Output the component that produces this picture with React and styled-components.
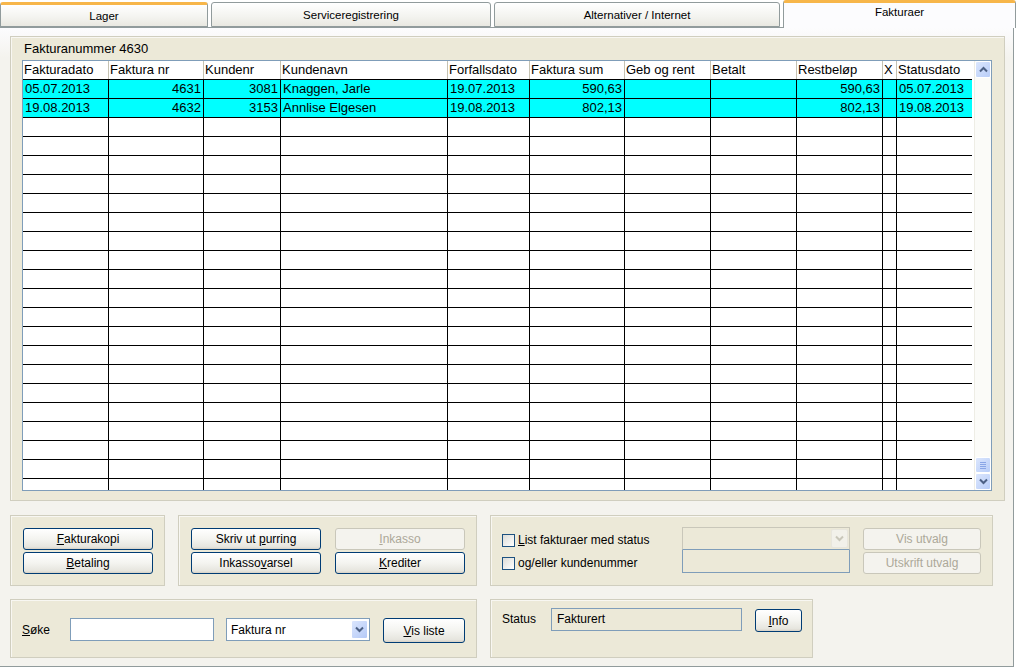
import React from "react";
import styled, { createGlobalStyle } from "styled-components";

const Global = createGlobalStyle`
  html, body {
    margin: 0;
    padding: 0;
    background: #ffffff;
  }
  body {
    font-family: "Liberation Sans", Arial, sans-serif;
    color: #000;
  }
`;

const Window = styled.div`
  width: 1016px;
  height: 668px;
  overflow: hidden;
  background: #ffffff;
`;

const TabBar = styled.div`
  display: flex;
  align-items: flex-end;
  gap: 3px;
  height: 27px;
  position: relative;
  z-index: 1;
`;

const Tab = styled.div`
  box-sizing: border-box;
  width: ${(p) => p.$w}px;
  height: ${(p) => (p.$active ? 28 : 25)}px;
  margin-bottom: ${(p) => (p.$active ? -1 : 0)}px;
  border: 1px solid #919b9c;
  border-bottom: ${(p) => (p.$active ? "none" : "1px solid #919b9c")};
  border-top: ${(p) =>
    p.$active || p.$hover ? "3px solid #f7b64a" : "1px solid #919b9c"};
  border-radius: 3px 3px 0 0;
  background: ${(p) =>
    p.$active ? "#fcfcfe" : "linear-gradient(#ffffff, #f3f3ef 60%, #e9e8e1)"};
  font-size: 11.5px;
  display: flex;
  justify-content: center;
  align-items: ${(p) => (p.$active ? "flex-start" : "center")};
  padding-top: ${(p) => (p.$active ? 3 : 0)}px;
`;

const Pane = styled.div`
  box-sizing: border-box;
  width: 1014px;
  height: 640px;
  border: 1px solid #919b9c;
  border-left: none;
  background: linear-gradient(#fcfcfe, #f4f3ee 30px);
  padding: 8px 0 0 10px;
`;

const Panel = styled.div`
  box-sizing: border-box;
  width: ${(p) => p.$w}px;
  height: ${(p) => p.$h}px;
  background: #ece9d8;
  border: 1px solid #d0cebf;
  box-shadow: inset 1px 1px 0 #f8f7f2;
`;

const MainPanel = styled(Panel)`
  padding: 5px 0 0 11px;
`;

const Caption = styled.div`
  font-size: 13px;
  height: 18px;
  line-height: 14px;
  padding-left: 2px;
`;

const GridBox = styled.div`
  box-sizing: border-box;
  width: 970px;
  height: 431px;
  border: 1px solid #7f9db9;
  background: #ffffff;
  display: flex;
  overflow: hidden;
`;

const GridArea = styled.div`
  width: 951px;
  overflow: hidden;
  font-size: 13px;
`;

const COLS = "86px 95px 77px 167px 82px 95px 86px 86px 86px 14px 76px";

const HeadRow = styled.div`
  display: grid;
  grid-template-columns: ${COLS};
  height: 18px;
  border-bottom: 1px solid #000;
  box-sizing: content-box;
  background: #ffffff;
`;

const HeadCell = styled.div`
  border-right: 1px solid #c5c2b2;
  padding-left: 1px;
  line-height: 18px;
  white-space: nowrap;
  overflow: hidden;
`;

const Row = styled.div`
  display: grid;
  grid-template-columns: ${COLS};
  height: 18px;
  border-bottom: 1px solid #000;
  background: ${(p) => (p.$hit ? "#00ffff" : "#ffffff")};
`;

const Cell = styled.div`
  border-right: 1px solid #000;
  padding: 0 2px;
  line-height: 18px;
  text-align: ${(p) => (p.$num ? "right" : "left")};
  white-space: nowrap;
  overflow: hidden;
`;

const ScrollBar = styled.div`
  margin-left: 2px;
  width: 16px;
  display: flex;
  flex-direction: column;
  background: #fbfbf8;
  border-left: 1px solid #eeede5;
`;

const ScrollBtn = styled.div`
  box-sizing: border-box;
  width: 16px;
  height: 17px;
  border: 1px solid #ffffff;
  border-radius: 2px;
  background: linear-gradient(135deg, #dbe6fd, #b8cdf8);
  display: flex;
  align-items: center;
  justify-content: center;
`;

const Track = styled.div`
  flex: 1;
  display: flex;
  flex-direction: column;
  justify-content: flex-end;
`;

const Thumb = styled(ScrollBtn)`
  height: 16px;
  flex-direction: column;
  gap: 1px;
  & > span {
    width: 6px;
    height: 1px;
    background: #8aa6e6;
  }
`;

const Bottom = styled.div`
  display: flex;
  gap: 13px;
  margin-top: ${(p) => p.$top}px;
`;

const ButtonPanel = styled(Panel)`
  padding: 12px 0 0 12px;
  display: grid;
  grid-template-columns: repeat(${(p) => p.$cols}, 130px);
  grid-auto-rows: 22px;
  column-gap: 14px;
  row-gap: 2px;
  align-content: start;
`;

const Button = styled.button`
  box-sizing: border-box;
  width: ${(p) => p.$w || 130}px;
  height: ${(p) => p.$h || 22}px;
  padding: 0;
  margin: 0;
  font-family: "Liberation Sans", Arial, sans-serif;
  font-size: 12px;
  color: ${(p) => (p.disabled ? "#aca899" : "#000")};
  border: 1px solid ${(p) => (p.disabled ? "#c9c7ba" : "#003c74")};
  border-radius: 3px;
  background: ${(p) =>
    p.disabled
      ? "#f4f3ee"
      : "linear-gradient(#ffffff, #f4f4f0 50%, #e6e5de 90%, #d6d0c5)"};
  & u {
    text-decoration: underline;
  }
`;

const FilterPanel = styled(Panel)`
  padding: 11px 0 0 11px;
  display: grid;
  grid-template-columns: 167px 168px 118px;
  column-gap: 13px;
  align-content: start;
`;

const CheckCol = styled.div`
  display: flex;
  flex-direction: column;
  gap: 9px;
  padding-top: 6px;
`;

const CheckRow = styled.label`
  display: flex;
  align-items: center;
  gap: 3px;
  font-size: 12px;
  height: 14px;
  white-space: nowrap;
`;

const Box = styled.span`
  box-sizing: border-box;
  flex: none;
  width: 13px;
  height: 13px;
  border: 1px solid #1c5180;
  background: linear-gradient(135deg, #dcdcd7, #ffffff);
`;

const FieldCol = styled.div`
  display: flex;
  flex-direction: column;
`;

const Combo = styled.div`
  box-sizing: border-box;
  height: 23px;
  border: 1px solid ${(p) => (p.$off ? "#c9c7ba" : "#7f9db9")};
  border-bottom: 1px solid #7f9db9;
  background: ${(p) => (p.$off ? "#ece9d8" : "#ffffff")};
  display: flex;
  align-items: center;
  justify-content: space-between;
  padding: 0 1px 0 4px;
  font-size: 12px;
  width: ${(p) => p.$w || 168}px;
`;

const DropBtn = styled.div`
  box-sizing: border-box;
  width: 17px;
  height: 19px;
  border: 1px solid ${(p) => (p.$off ? "#e8e6dd" : "#ffffff")};
  border-radius: 2px;
  background: ${(p) =>
    p.$off ? "#f2f1ea" : "linear-gradient(135deg, #dbe6fd, #b4c9f7)"};
  display: flex;
  align-items: center;
  justify-content: center;
`;

const TextBox = styled.div`
  box-sizing: border-box;
  width: ${(p) => p.$w}px;
  height: 23px;
  border: 1px solid #7f9db9;
  border-top: ${(p) => (p.$joined ? "none" : "1px solid #7f9db9")};
  background: ${(p) => (p.$off ? "#ece9d8" : "#ffffff")};
  font-size: 12px;
  line-height: 21px;
  padding-left: 5px;
`;

const ButtonCol = styled.div`
  display: flex;
  flex-direction: column;
  gap: 2px;
  padding-top: 1px;
`;

const SearchPanel = styled(Panel)`
  display: flex;
  align-items: center;
  padding-left: 11px;
  padding-top: 2px;
`;

const Label = styled.span`
  font-size: 12px;
  width: ${(p) => p.$w}px;
`;

const StatusPanel = styled(Panel)`
  display: flex;
  align-items: flex-start;
  padding: 8px 0 0 11px;
`;

const Chevron = ({ up, off }) => (
  <svg width="9" height="7" viewBox="0 0 9 7">
    <path
      d={up ? "M1 5.5 L4.5 2 L8 5.5" : "M1 1.5 L4.5 5 L8 1.5"}
      fill="none"
      stroke={off ? "#c9c7ba" : "#4d6185"}
      strokeWidth="2"
    />
  </svg>
);

const columns = [
  "Fakturadato",
  "Faktura nr",
  "Kundenr",
  "Kundenavn",
  "Forfallsdato",
  "Faktura sum",
  "Geb og rent",
  "Betalt",
  "Restbeløp",
  "X",
  "Statusdato",
];

const numeric = [false, true, true, false, false, true, true, true, true, false, false];

const invoices = [
  ["05.07.2013", "4631", "3081", "Knaggen, Jarle", "19.07.2013", "590,63", "", "", "590,63", "", "05.07.2013"],
  ["19.08.2013", "4632", "3153", "Annlise Elgesen", "19.08.2013", "802,13", "", "", "802,13", "", "19.08.2013"],
];

const rows = [...invoices, ...Array.from({ length: 20 }, () => Array(11).fill(""))];

export default function App() {
  return (
    <Window>
      <Global />
      <TabBar>
        <Tab $w={208} $hover>Lager</Tab>
        <Tab $w={280}>Serviceregistrering</Tab>
        <Tab $w={286}>Alternativer / Internet</Tab>
        <Tab $w={233} $active>Fakturaer</Tab>
      </TabBar>
      <Pane>
        <MainPanel $w={995} $h={465}>
          <Caption>Fakturanummer 4630</Caption>
          <GridBox>
            <GridArea>
              <HeadRow>
                {columns.map((c) => (
                  <HeadCell key={c}>{c}</HeadCell>
                ))}
              </HeadRow>
              {rows.map((r, i) => (
                <Row key={i} $hit={i < invoices.length}>
                  {r.map((v, j) => (
                    <Cell key={j} $num={numeric[j]}>
                      {v}
                    </Cell>
                  ))}
                </Row>
              ))}
            </GridArea>
            <ScrollBar>
              <ScrollBtn>
                <Chevron up />
              </ScrollBtn>
              <Track>
                <Thumb>
                  <span />
                  <span />
                  <span />
                  <span />
                </Thumb>
              </Track>
              <ScrollBtn>
                <Chevron />
              </ScrollBtn>
            </ScrollBar>
          </GridBox>
        </MainPanel>

        <Bottom $top={14}>
          <ButtonPanel $w={155} $h={71} $cols={1}>
            <Button>
              <u>F</u>akturakopi
            </Button>
            <Button>
              <u>B</u>etaling
            </Button>
          </ButtonPanel>
          <ButtonPanel $w={299} $h={71} $cols={2}>
            <Button>
              Skriv ut <u>p</u>urring
            </Button>
            <Button disabled>
              <u>I</u>nkasso
            </Button>
            <Button>
              Inkasso<u>v</u>arsel
            </Button>
            <Button>
              <u>K</u>rediter
            </Button>
          </ButtonPanel>
          <FilterPanel $w={503} $h={71}>
            <CheckCol>
              <CheckRow>
                <Box />
                <span>
                  <u>L</u>ist fakturaer med status
                </span>
              </CheckRow>
              <CheckRow>
                <Box />
                <span>og/eller kundenummer</span>
              </CheckRow>
            </CheckCol>
            <FieldCol>
              <Combo $off>
                <span />
                <DropBtn $off>
                  <Chevron off />
                </DropBtn>
              </Combo>
              <TextBox $w={168} $off $joined />
            </FieldCol>
            <ButtonCol>
              <Button $w={118} disabled>
                Vis utvalg
              </Button>
              <Button $w={118} disabled>
                Utskrift utvalg
              </Button>
            </ButtonCol>
          </FilterPanel>
        </Bottom>

        <Bottom $top={13}>
          <SearchPanel $w={467} $h={59}>
            <Label $w={48}>
              <u>S</u>øke
            </Label>
            <TextBox $w={144} />
            <Combo $w={144} style={{ marginLeft: 12 }}>
              <span>Faktura nr</span>
              <DropBtn>
                <Chevron />
              </DropBtn>
            </Combo>
            <Button $w={82} $h={25} style={{ marginLeft: 13, marginTop: 2 }}>
              <u>V</u>is liste
            </Button>
          </SearchPanel>
          <StatusPanel $w={323} $h={59}>
            <Label $w={49} style={{ lineHeight: "23px" }}>
              Status
            </Label>
            <TextBox $w={191} $off>
              Fakturert
            </TextBox>
            <Button $w={47} $h={23} style={{ marginLeft: 13, marginTop: 1 }}>
              <u>I</u>nfo
            </Button>
          </StatusPanel>
        </Bottom>
      </Pane>
    </Window>
  );
}
